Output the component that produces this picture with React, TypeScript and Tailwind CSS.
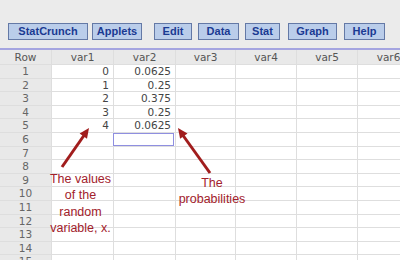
const buttons = [
  { label: 'StatCrunch', w: 'w-[80px]', ml: 'ml-[8px]' },
  { label: 'Applets', w: 'w-[50px]', ml: 'ml-[4px]' },
  { label: 'Edit', w: 'w-[38px]', ml: 'ml-[12px]' },
  { label: 'Data', w: 'w-[41px]', ml: 'ml-[6px]' },
  { label: 'Stat', w: 'w-[35px]', ml: 'ml-[6px]' },
  { label: 'Graph', w: 'w-[49px]', ml: 'ml-[8px]' },
  { label: 'Help', w: 'w-[41px]', ml: 'ml-[7px]' },
];

const headers = ['Row', 'var1', 'var2', 'var3', 'var4', 'var5', 'var6'];

const data: [string, string][] = [
  ['0', '0.0625'],
  ['1', '0.25'],
  ['2', '0.375'],
  ['3', '0.25'],
  ['4', '0.0625'],
];

const cell = 'border-r border-b border-[#dedede] h-[13.6px] leading-[13px]';

export default function App() {
  const rows = Array.from({ length: 15 }, (_, i) => i + 1);

  return (
    <div className="relative w-[400px] h-[260px] overflow-hidden bg-white font-['DejaVu_Sans',sans-serif]">
      {/* toolbar */}
      <div className="h-[48px] bg-[#ebebeb] flex items-start pt-[23px]">
        {buttons.map((b) => (
          <div
            key={b.label}
            className={`${b.w} ${b.ml} h-[17px] shrink-0 flex items-center justify-center border border-[#6479a6] bg-[#bacdea] text-[#1a3a92] text-[11px] font-bold font-['Liberation_Sans',Arial,sans-serif]`}
          >
            {b.label}
          </div>
        ))}
      </div>
      <div className="h-[2px] bg-[#a4a4e0]" />

      {/* grid */}
      <div className="grid grid-cols-[52px_62px_62px_60px_61px_61px_62px] text-[10.5px] text-[#555]">
        {headers.map((h) => (
          <div key={h} className="h-[15px] leading-[15px] text-center bg-[#e9e9e9] border-r border-b border-[#dedede]">
            {h}
          </div>
        ))}
        {rows.map((r) => {
          const d = data[r - 1];
          return [
            <div key={`r${r}`} className={`${cell} bg-[#e9e9e9] text-center text-[#666]`}>
              {r}
            </div>,
            <div key={`a${r}`} className={`${cell} text-right pr-[4px] text-[#444]`}>
              {d ? d[0] : ''}
            </div>,
            <div key={`b${r}`} className={`${cell} text-right pr-[4px] text-[#444]`}>
              {r === 6 ? (
                <div className="h-full w-[61px] -ml-[1px] border border-[#8f8fe0]" />
              ) : d ? (
                d[1]
              ) : (
                ''
              )}
            </div>,
            <div key={`c${r}`} className={cell} />,
            <div key={`d${r}`} className={cell} />,
            <div key={`e${r}`} className={cell} />,
            <div key={`f${r}`} className={cell} />,
          ];
        })}
      </div>

      {/* annotations */}
      <svg className="absolute inset-0 pointer-events-none" width="400" height="260">
        <line x1="62" y1="167" x2="85" y2="134" stroke="#a11d1d" strokeWidth="3" />
        <polygon points="89,128 87,138.8 79.6,133.6" fill="#a11d1d" />
        <line x1="210" y1="173" x2="182" y2="134" stroke="#a11d1d" strokeWidth="3" />
        <polygon points="178,128 187.5,133.6 180.1,138.8" fill="#a11d1d" />
      </svg>
      <div className="absolute left-[40px] top-[171px] w-[81px] text-center text-[12.5px] leading-[16.4px] text-[#a2212b] font-['Liberation_Sans',Arial,sans-serif]">
        The values
        <br />
        of the
        <br />
        random
        <br />
        variable, x.
      </div>
      <div className="absolute left-[171px] top-[175px] w-[82px] text-center text-[12.5px] leading-[16px] text-[#a2212b] font-['Liberation_Sans',Arial,sans-serif]">
        The
        <br />
        probabilities
      </div>
    </div>
  );
}
